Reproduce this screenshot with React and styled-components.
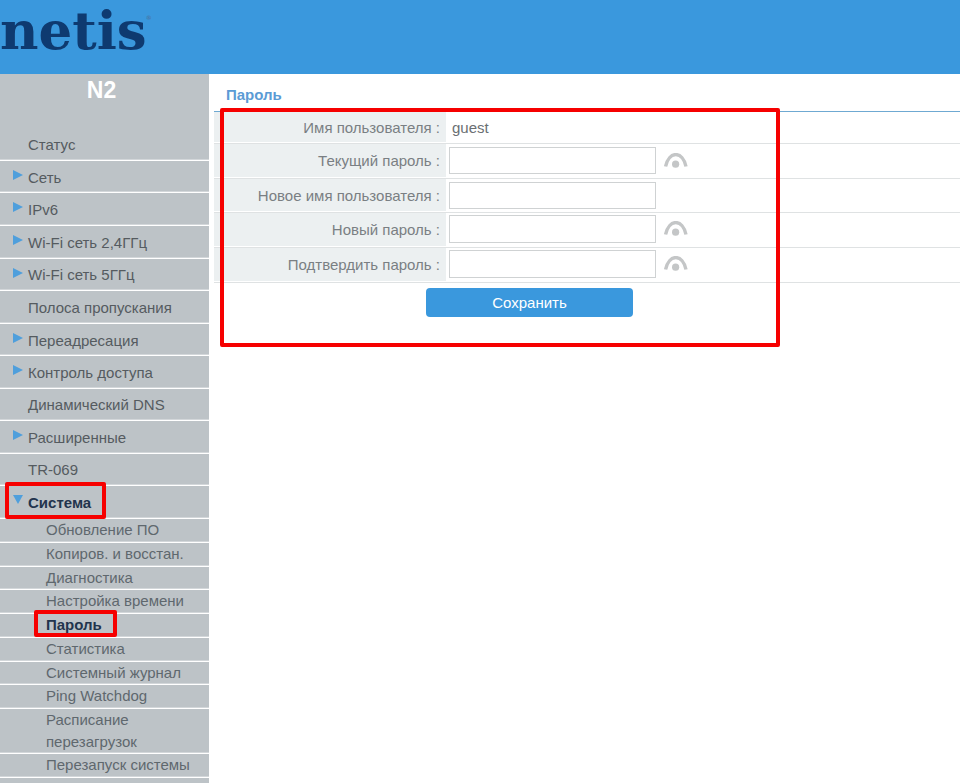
import React from "react";
import styled, { createGlobalStyle } from "styled-components";

const Global = createGlobalStyle`
  html, body { margin: 0; padding: 0; background: #fff; overflow: hidden; height: 783px; }
  * { box-sizing: border-box; }
  body { font-family: "Liberation Sans", Arial, sans-serif; }
`;
const Page = styled.div`position: relative; width: 960px; height: 783px; overflow: hidden;`;
const Header = styled.header`height: 74px; background: #3a98dd; overflow: hidden; display: flex; align-items: flex-start;`;
const Logo = styled.div`
  font-family: "DejaVu Serif", serif; font-weight: 700; font-size: 53px; line-height: 58px;
  color: #0e3a70; letter-spacing: 0; margin: 1px 0 0 0; position: relative;
  sup { font-size: 6px; line-height: 6px; font-weight: 400; position: absolute; right: -5px; top: 14px; color: #4a6d96; }
`;
const Main = styled.div`display: flex; height: 709px;`;
const Side = styled.nav`width: 209px; flex: none; background: #bdc3c7; overflow: hidden;`;
const Model = styled.div`height: 55px; text-align: center; color: #fff; font-weight: 700; font-size: 23px; line-height: 32px; padding-right: 6px;`;
const Row = styled.div`
  position: relative; height: ${p => p.$h}px; border-bottom: 1px solid #fff; box-shadow: 0 -1px 0 #d3d7da inset;
  padding-left: 28px; font-size: 15px; color: ${p => p.$active ? "#22344d" : "#555b60"};
  font-weight: ${p => p.$active ? 700 : 400};
  line-height: ${p => p.$lh}px; white-space: nowrap;
`;
const Arrow = styled.span`
  position: absolute; left: 13px; top: 9px; width: 0; height: 0;
  border-top: 5.5px solid transparent; border-bottom: 5.5px solid transparent; border-left: 10px solid #4f9fdc;
`;
const ArrowDown = styled.span`
  position: absolute; left: 13px; top: 9px; width: 0; height: 0;
  border-left: 5px solid transparent; border-right: 5px solid transparent; border-top: 9px solid #4f9fdc;
`;
const SubRow = styled.div`
  height: ${p => p.$h}px; border-bottom: 1px solid #fff; box-shadow: 0 -1px 0 #d3d7da inset; padding-left: 46px; font-size: 15px;
  color: ${p => p.$active ? "#22344d" : "#5f686e"}; font-weight: ${p => p.$active ? 700 : 400};
  line-height: ${p => p.$lh}px; white-space: ${p => p.$wrap ? "normal" : "nowrap"};
`;
const Content = styled.section`flex: 1; padding-left: 5px; min-width: 0;`;
const Title = styled.div`
  height: 38px; border-bottom: 1px solid #6fa9d2; padding-left: 12px; color: #5b9bd5;
  font-weight: 700; font-size: 15px; line-height: 41px;
`;
const FormRow = styled.div`
  display: flex; height: ${p => p.$h}px; border-bottom: 1px solid #dfe2e3;
`;
const Label = styled.div`
  width: 232px; flex: none; background: #ecf0f1; margin-bottom: 1px; text-align: right; padding-right: 6px;
  color: #7a7f83; font-size: 15px; line-height: ${p => p.$lh}px; white-space: nowrap;
`;
const Value = styled.div`padding-left: 6px; color: #6a6f73; font-size: 15px; line-height: ${p => p.$lh}px;`;
const Field = styled.div`display: flex; align-items: center; align-self: flex-start; padding: ${p => p.$top}px 0 0 3px; gap: 8px;`;
const Input = styled.input`
  width: 207px; height: ${p => p.$h}px; border: 1px solid #cfd2d3; background: #fff; padding: 0; margin: 0; outline: none;
`;
const Eye = styled.svg`width: 24px; height: 16px; display: block;`;
const Actions = styled.div`padding: 5px 0 0 212px;`;
const Save = styled.button`
  width: 207px; height: 29px; background: #3a98dd; border: 0; border-radius: 4px; color: #fff;
  font: 400 15px "Liberation Sans", Arial, sans-serif; padding: 0;
`;
const Mark = styled.div`
  position: absolute; left: ${p => p.$x}px; top: ${p => p.$y}px; width: ${p => p.$w}px; height: ${p => p.$h}px;
  border: 4px solid #f60000; border-radius: 2px; pointer-events: none;
`;

const EyeIcon = () => (
  <Eye viewBox="0 0 24 16">
    <path d="M1.6 13.5 C5 -2.4 18.6 -2.4 22 13.5" fill="none" stroke="#c4c6c7" strokeWidth="3.4" />
    <circle cx="11.6" cy="11.2" r="3.6" fill="#c4c6c7" />
  </Eye>
);

const top = [
  ["Статус", 0, 32, 31],
  ["Сеть", 1, 32, 33.5], ["IPv6", 1, 33, 33.5], ["Wi-Fi сеть 2,4ГГц", 1, 32.5, 34], ["Wi-Fi сеть 5ГГц", 1, 32.5, 32],
  ["Полоса пропускания", 0, 32.5, 33.5], ["Переадресация", 1, 32.5, 33], ["Контроль доступа", 1, 32.5, 34],
  ["Динамический DNS", 0, 32.5, 32], ["Расширенные", 1, 32.5, 34], ["TR-069", 0, 32.5, 31],
];
const sub = [
  ["Обновление ПО", 24, 21], ["Копиров. и восстан.", 24, 21], ["Диагностика", 23, 22], ["Настройка времени", 24, 21],
  ["Пароль", 24, 21, true], ["Статистика", 24, 21], ["Системный журнал", 23.5, 22.5], ["Ping Watchdog", 24, 21],
];

export default function App() {
  return (
    <Page>
      <Global />
      <Header><Logo>netis<sup>®</sup></Logo></Header>
      <Main>
        <Side>
          <Model>N2</Model>
          {top.map(([t, a, h, lh]) => <Row key={t} $h={h} $lh={lh}>{a ? <Arrow /> : null}{t}</Row>)}
          <Row $h={32.5} $lh={34} $active><ArrowDown />Система</Row>
          {sub.map(([t, h, lh, act]) => <SubRow key={t} $h={h} $lh={lh} $active={act}>{t}</SubRow>)}
          <SubRow $h={45} $lh={22} $wrap>Расписание перезагрузок</SubRow>
          <SubRow $h={24} $lh={21}>Перезапуск системы</SubRow>
        </Side>
        <Content>
          <Title>Пароль</Title>
          <FormRow $h={32}><Label $lh={31}>Имя пользователя :</Label><Value $lh={31}>guest</Value></FormRow>
          <FormRow $h={35}><Label $lh={34}>Текущий пароль :</Label><Field $top={3}><Input $h={27} type="text" /><EyeIcon /></Field></FormRow>
          <FormRow $h={34}><Label $lh={33}>Новое имя пользователя :</Label><Field $top={3}><Input $h={27} type="text" /></Field></FormRow>
          <FormRow $h={35}><Label $lh={34}>Новый пароль :</Label><Field $top={2}><Input $h={28} type="text" /><EyeIcon /></Field></FormRow>
          <FormRow $h={35}><Label $lh={34}>Подтвердить пароль :</Label><Field $top={2}><Input $h={28} type="text" /><EyeIcon /></Field></FormRow>
          <Actions><Save>Сохранить</Save></Actions>
        </Content>
      </Main>
      <Mark $x={220} $y={108} $w={560} $h={239} />
      <Mark $x={5} $y={482} $w={101} $h={37} />
      <Mark $x={34} $y={610} $w={83} $h={27} />
    </Page>
  );
}
